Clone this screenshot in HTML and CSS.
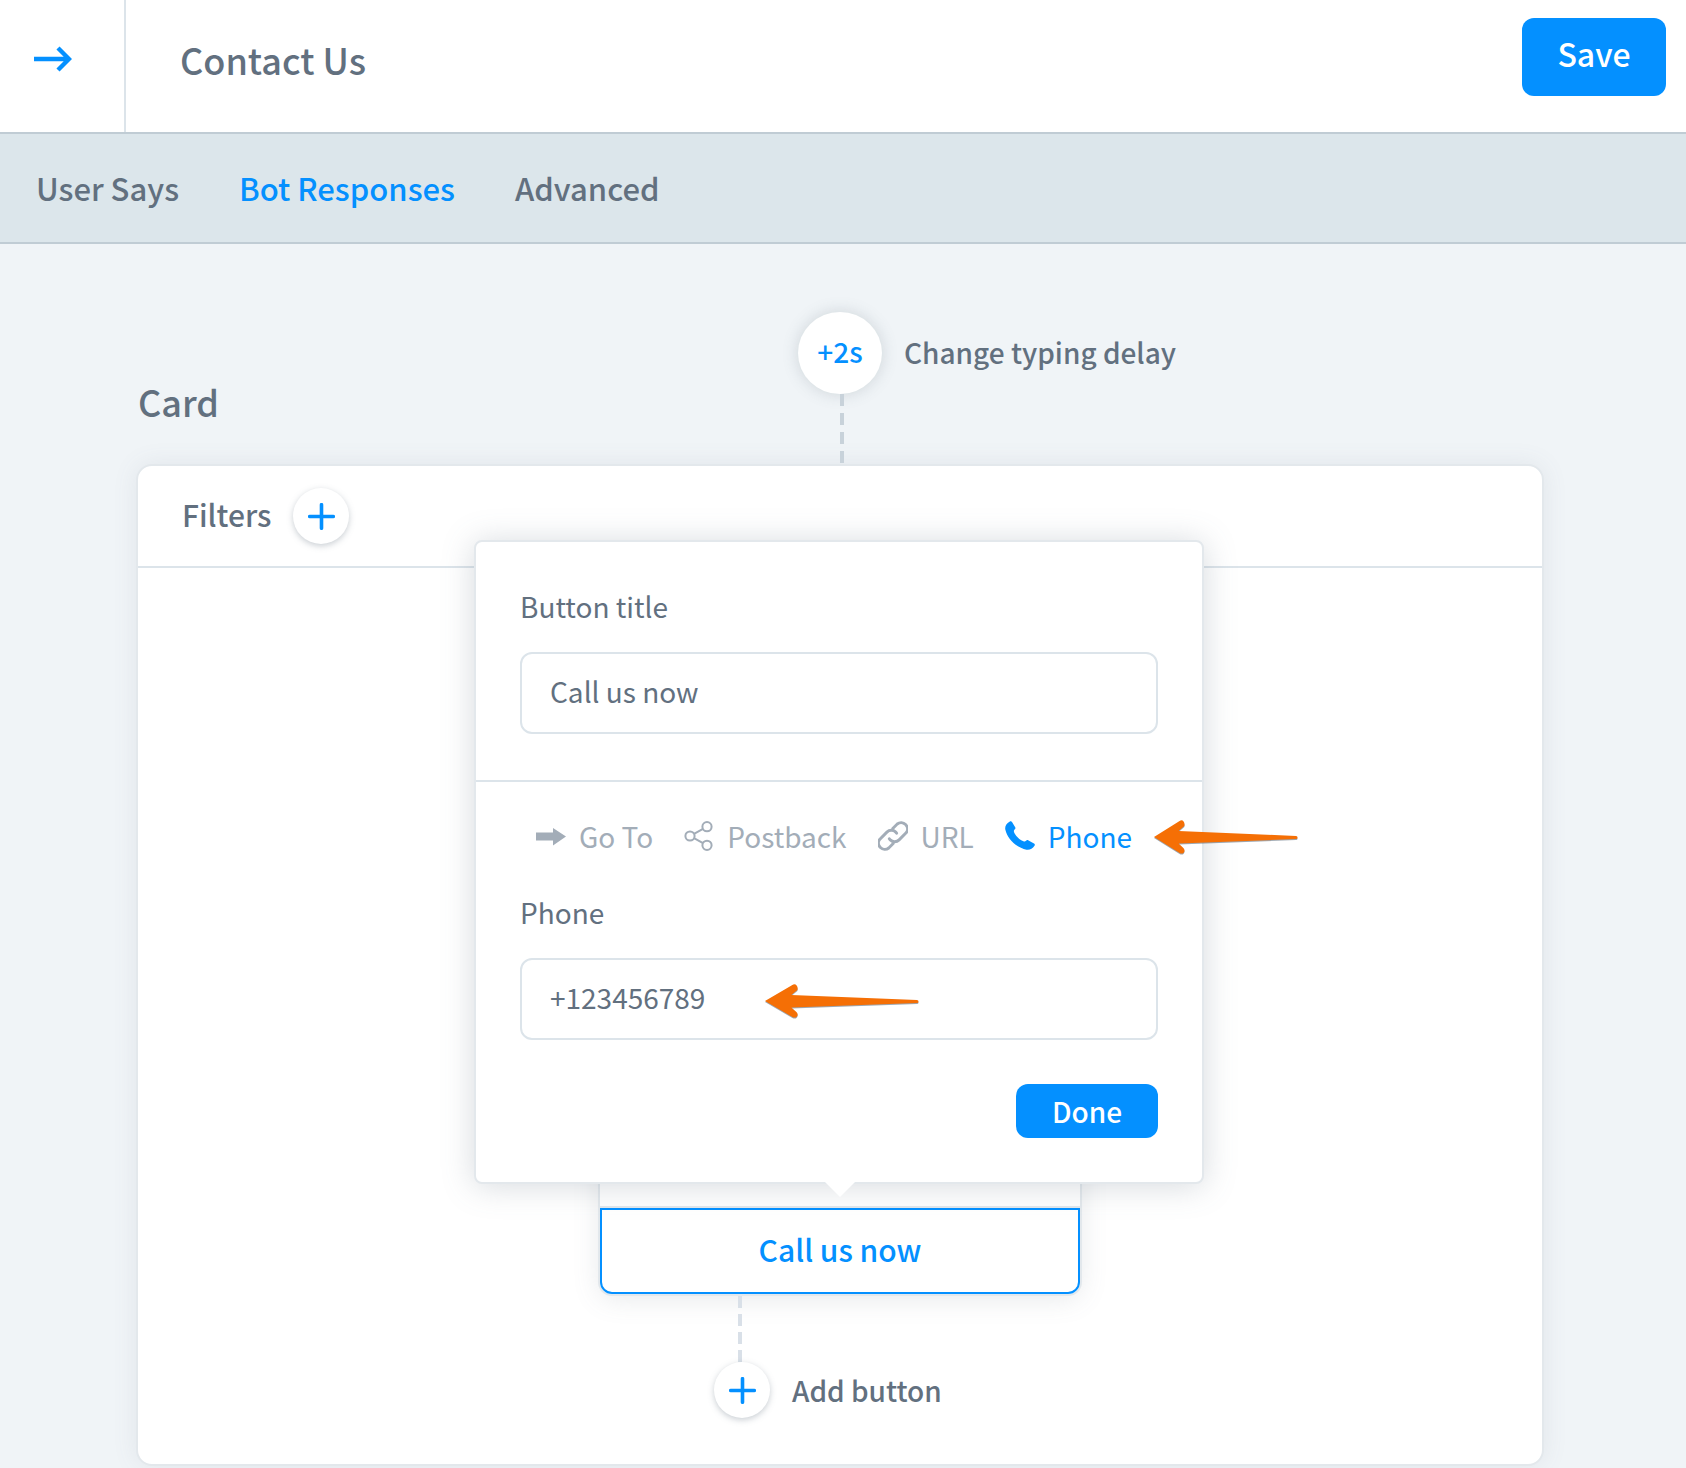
FILE: index.html
```html
<!DOCTYPE html>
<html lang="en">
<head>
<meta charset="utf-8">
<meta name="viewport" content="width=device-width, initial-scale=1">
<title>Contact Us</title>
<link rel="stylesheet" href="styles.css">
</head>
<body>
<header class="topbar">
  <button class="topbar-toggle" type="button" aria-label="Expand panel">
    <svg width="38" height="26" viewBox="0 0 38 26" fill="none" stroke="currentColor" stroke-width="4.4"><path d="M0 13H35M24 2l11 11-11 11"/></svg>
  </button>
  <h1 class="topbar-title">Contact Us</h1>
  <button class="btn btn-save" type="button">Save</button>
</header>

<nav class="tabs">
  <a class="tab" href="#user-says">User Says</a>
  <a class="tab is-active" href="#bot-responses">Bot Responses</a>
  <a class="tab" href="#advanced">Advanced</a>
</nav>

<main class="flow">
  <div class="flow-head">
    <h2 class="block-name">Card</h2>
    <div class="delay">
      <button class="delay-value" id="delay" type="button">+2s</button>
      <span class="connector connector-delay"></span>
    </div>
    <label class="delay-label" for="delay">Change typing delay</label>
  </div>

  <section class="card">
    <div class="card-head">
      <h3 class="filters-title">Filters</h3>
      <button class="round" type="button" aria-label="Add filter">
        <svg width="27" height="27" viewBox="0 0 27 27" fill="none" stroke="currentColor" stroke-width="3.6" stroke-linecap="round"><path d="M13.5 1.7v23.6M1.7 13.5h23.6"/></svg>
      </button>
    </div>

    <div class="card-body">
      <div class="preview">
        <div class="preview-media"></div>
        <div class="preview-action">
          <button class="preview-button" type="button">Call us now</button>

          <form class="popover">
            <div class="popover-section">
              <label class="label" for="button-title">Button title</label>
              <input class="input" id="button-title" type="text" value="Call us now">
            </div>
            <div class="popover-section">
              <div class="types">
                <button class="type" type="button">
                  <svg width="30" height="30" viewBox="0 0 30 30" fill="currentColor"><path d="M0 11.500h17V7l13 8.500L17 24.500V19.500H0z"/></svg>
                  Go To
                </button>
                <button class="type" type="button">
                  <svg width="30" height="30" viewBox="0 0 30 30" fill="none" stroke="currentColor" stroke-width="2"><circle cx="6" cy="15" r="4.600"/><circle cx="23" cy="5.700" r="4.600"/><circle cx="23" cy="24.300" r="4.600"/><path d="M10 12.900l9-5M10 17.200l9 5"/></svg>
                  Postback
                </button>
                <button class="type" type="button">
                  <svg width="30" height="30" viewBox="1.500 1.500 27 27" fill="none" stroke="currentColor" stroke-width="2.600" stroke-linecap="round"><path d="M14.500 7.500l4-4a5.700 5.700 0 0 1 8 8l-6.300 6.300a5.700 5.700 0 0 1-8 0 5 5 0 0 1-.8-1" transform="translate(.3 .7)"/><path d="M15.500 22.500l-4 4a5.700 5.700 0 0 1-8-8l6.300-6.300a5.700 5.700 0 0 1 8 0 5 5 0 0 1 .8 1" transform="translate(-.3 -.7)"/></svg>
                  URL
                </button>
                <button class="type is-active" type="button">
                  <svg width="30" height="30" viewBox="0 0 30 30" fill="currentColor"><path d="M4.500.8C5.500 0 6.500.2 7 1L10.200 6.200C10.700 7 10.500 7.700 9.800 8.300 8.400 9.500 8.700 10.600 9.500 12.200 11.700 16 14.600 18.600 18.400 20.300 19.600 20.800 20.300 20.600 21 19.800 21.700 19 22.600 18.900 23.500 19.400L29 22.400C29.900 22.900 30.100 23.800 29.500 24.700 27.500 27.700 24.800 29.200 21.500 28.700 11 26.500 2.500 18 .3 8.500-.3 5.300 1.500 2.500 4.500.8z"/></svg>
                  Phone
                  <svg class="pointer pointer-type" viewBox="0 0 152 34" preserveAspectRatio="none" fill="#f56f05"><path d="M0 17L27 1C30-1 33 2 32 6L26 11 150 16a1 1 0 0 1 0 3L26 23.500 31 28C34 31 31 35 27 33z"/></svg>
                </button>
              </div>
              <label class="label" for="phone">Phone</label>
              <div class="field">
                <input class="input" id="phone" type="tel" value="+123456789">
                <svg class="pointer pointer-field" viewBox="0 0 152 34" preserveAspectRatio="none" fill="#f56f05"><path d="M0 17L27 1C30-1 33 2 32 6L26 11 150 16a1 1 0 0 1 0 3L26 23.500 31 28C34 31 31 35 27 33z"/></svg>
              </div>
              <button class="btn btn-done" type="button">Done</button>
            </div>
          </form>
        </div>
      </div>

      <div class="add">
        <span class="connector connector-add"></span>
        <div class="add-row">
          <button class="round" id="add-button" type="button">
            <svg width="27" height="27" viewBox="0 0 27 27" fill="none" stroke="currentColor" stroke-width="3.6" stroke-linecap="round"><path d="M13.5 1.7v23.6M1.7 13.5h23.6"/></svg>
          </button>
          <label class="add-label" for="add-button">Add button</label>
        </div>
      </div>
    </div>
  </section>
</main>
</body>
</html>
```
FILE: styles.css
```css
:root {
  --blue: #0490ff;
  --text: #62707f;
  --muted: #a3adb8;
  --line: #dce4ea;
  --edge: #e3e8ec;
}

* {
  box-sizing: border-box;
}

body {
  margin: 0;
  background: #f0f4f7;
  color: var(--text);
  font-family: "Noto Sans CJK SC", "Noto Sans", sans-serif;
  font-size: 28px;
  line-height: 40px;
}

h1, h2, h3 {
  margin: 0;
  font-weight: 500;
}

button, input {
  margin: 0;
  padding: 0;
  border: 0;
  background: none;
  color: inherit;
  font: inherit;
}

svg {
  display: block;
  flex: none;
}

.btn {
  background: var(--blue);
  border-radius: 12px;
  color: #fff;
  font-weight: 500;
}

/* Top bar */
.topbar {
  display: flex;
  height: 134px;
  background: #fff;
  border-bottom: 2px solid #c0ccd4;
}

.topbar-toggle {
  display: flex;
  align-items: center;
  width: 126px;
  padding: 0 0 14px 34px;
  border-right: 2px solid var(--line);
  color: var(--blue);
}

.topbar-title {
  flex: 1;
  padding: 34px 0 0 54px;
  font-size: 36px;
  line-height: 50px;
}

.btn-save {
  width: 144px;
  height: 78px;
  margin: 18px 20px 0 0;
  padding-bottom: 8px;
  font-size: 32px;
}

/* Tabs */
.tabs {
  display: flex;
  align-items: center;
  gap: 60px;
  height: 110px;
  padding: 0 36px;
  background: #dce6eb;
  border-bottom: 2px solid #c0ccd4;
}

.tab {
  color: var(--text);
  font-size: 31px;
  font-weight: 500;
  text-decoration: none;
}

.tab.is-active {
  color: var(--blue);
}

/* Conversation flow */
.flow {
  padding: 68px 142px 2px 136px;
}

.flow-head {
  display: grid;
  grid-template-columns: 1fr auto 1fr;
}

.block-name {
  align-self: end;
  padding: 0 0 38px 2px;
  font-size: 36px;
  line-height: 50px;
}

.delay {
  width: 84px;
}

.delay-value {
  display: block;
  width: 84px;
  height: 82px;
  padding-bottom: 4px;
  border-radius: 50%;
  background: #fff;
  box-shadow: 0 0 16px rgba(98, 112, 127, 0.24);
  color: var(--blue);
  font-weight: 500;
}

.delay-label {
  padding-left: 22px;
  font-weight: 500;
  line-height: 80px;
}

.connector {
  display: block;
  width: 4px;
}

.connector-delay {
  height: 70px;
  margin-left: 42px;
  background: repeating-linear-gradient(#c8d2da 0 12px, transparent 12px 19px);
}

.connector-add {
  height: 68px;
  margin-left: 24px;
  background: repeating-linear-gradient(transparent 0 2px, #d9e0e8 2px 14px, transparent 14px 18px);
}

.round {
  display: flex;
  align-items: center;
  justify-content: center;
  width: 56px;
  height: 56px;
  border-radius: 50%;
  background: #fff;
  box-shadow: 0 2px 6px rgba(98, 112, 127, 0.34);
  color: var(--blue);
}

/* Card block */
.card {
  background: #fff;
  border: 2px solid var(--edge);
  border-radius: 16px;
  box-shadow: 0 0 24px rgba(98, 112, 127, 0.1);
}

.card-head {
  display: flex;
  align-items: center;
  gap: 22px;
  height: 102px;
  padding: 0 44px;
  border-bottom: 2px solid var(--line);
}

.filters-title {
  padding-bottom: 4px;
  font-size: 30px;
}

.card-body {
  display: flex;
  flex-direction: column;
  align-items: center;
  padding: 40px 0 46px;
}

.preview {
  width: 480px;
  border-radius: 12px;
  background: #fff;
  box-shadow: 0 0 0 2px var(--edge), 0 4px 28px rgba(98, 112, 127, 0.16);
}

.preview-media {
  height: 600px;
  border-bottom: 2px solid var(--edge);
}

.preview-action {
  position: relative;
}

.preview-button {
  display: block;
  width: 100%;
  height: 86px;
  padding-bottom: 4px;
  border: 2px solid var(--blue);
  border-radius: 0 0 12px 12px;
  background: #fff;
  color: var(--blue);
  font-size: 30px;
  font-weight: 500;
}

/* Button editor */
.popover {
  position: absolute;
  bottom: calc(100% + 24px);
  left: 50%;
  width: 730px;
  margin-left: -366px;
  background: #fff;
  border: 2px solid var(--edge);
  border-radius: 8px;
  box-shadow: 0 2px 32px rgba(98, 112, 127, 0.26);
}

.popover::after {
  content: "";
  position: absolute;
  top: 100%;
  left: 50%;
  margin-left: -14px;
  border: 15px solid transparent;
  border-top-color: #fff;
  border-bottom: 0;
}

.popover-section {
  display: flex;
  flex-direction: column;
  padding: 44px 44px 46px;
}

.popover-section + .popover-section {
  padding: 34px 44px 44px;
  border-top: 2px solid var(--line);
}

.label {
  margin-bottom: 26px;
}

.input {
  width: 100%;
  height: 82px;
  padding: 0 28px 4px;
  border: 2px solid var(--line);
  border-radius: 12px;
}

.types {
  display: flex;
  gap: 31px;
  margin-bottom: 36px;
  padding-left: 16px;
}

.type {
  position: relative;
  display: flex;
  align-items: center;
  gap: 13px;
  color: var(--muted);
  white-space: nowrap;
}

.type.is-active {
  color: var(--blue);
}

.field {
  position: relative;
}

.pointer {
  position: absolute;
  height: 34px;
  filter: drop-shadow(0 1px 0 rgba(60, 80, 100, 0.5));
}

.pointer-type {
  top: 4px;
  left: calc(100% + 22px);
  width: 144px;
}

.pointer-field {
  top: 26px;
  left: 245px;
  width: 154px;
}

.btn-done {
  align-self: flex-end;
  width: 142px;
  height: 54px;
  margin-top: 44px;
}

/* Add button */
.add {
  width: 480px;
  padding-left: 114px;
}

.add-row {
  display: flex;
  align-items: center;
  gap: 22px;
}

.add-label {
  font-weight: 500;
}
```
